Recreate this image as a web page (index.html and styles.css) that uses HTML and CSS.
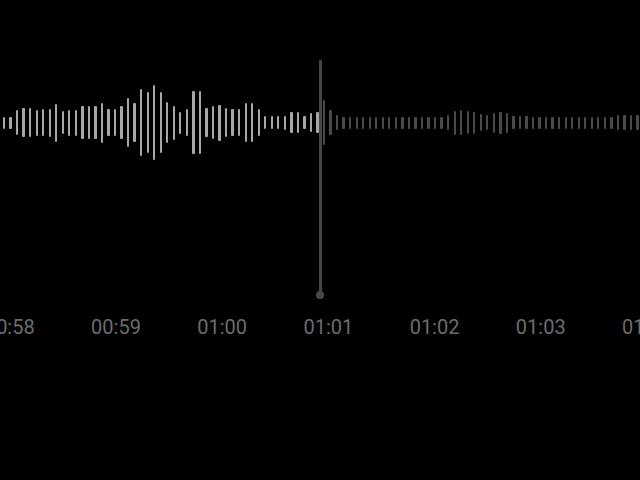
FILE: index.html
```html
<!DOCTYPE html>
<html>
<head>
<meta charset="utf-8">
<link rel="stylesheet" href="styles.css">
</head>
<body>
<main class="screen">
  <div class="wave">
    <i class="bar on" style="height:12px"></i><i class="bar on" style="height:12px"></i><i class="bar on" style="height:25px"></i><i class="bar on" style="height:29px"></i><i class="bar on" style="height:29px"></i><i class="bar on" style="height:26px"></i><i class="bar on" style="height:27px"></i><i class="bar on" style="height:28px"></i><i class="bar on" style="height:38px"></i><i class="bar on" style="height:23px"></i><i class="bar on" style="height:26px"></i><i class="bar on" style="height:26px"></i><i class="bar on" style="height:33px"></i><i class="bar on" style="height:33px"></i><i class="bar on" style="height:33px"></i><i class="bar on" style="height:40px"></i>
    <i class="bar on" style="height:27px"></i><i class="bar on" style="height:27px"></i><i class="bar on" style="height:33px"></i><i class="bar on" style="height:49px"></i><i class="bar on" style="height:39px"></i><i class="bar on" style="height:67px"></i><i class="bar on" style="height:61px"></i><i class="bar on" style="height:75px"></i><i class="bar on" style="height:61px"></i><i class="bar on" style="height:41px"></i><i class="bar on" style="height:34px"></i><i class="bar on" style="height:22px"></i><i class="bar on" style="height:27px"></i><i class="bar on" style="height:63px"></i><i class="bar on" style="height:63px"></i><i class="bar on" style="height:29px"></i><i class="bar on" style="height:33px"></i>
    <i class="bar on" style="height:36px"></i><i class="bar on" style="height:29px"></i><i class="bar on" style="height:27px"></i><i class="bar on" style="height:27px"></i><i class="bar on" style="height:39px"></i><i class="bar on" style="height:39px"></i><i class="bar on" style="height:27px"></i><i class="bar on" style="height:13px"></i><i class="bar on" style="height:13px"></i><i class="bar on" style="height:13px"></i><i class="bar on" style="height:14px"></i><i class="bar on" style="height:21px"></i><i class="bar on" style="height:21px"></i><i class="bar on" style="height:13px"></i><i class="bar on" style="height:19px"></i><i class="bar on" style="height:21px"></i>
    <i class="bar" style="height:45px"></i><i class="bar" style="height:25px"></i><i class="bar" style="height:15px"></i><i class="bar" style="height:12px"></i><i class="bar" style="height:12px"></i><i class="bar" style="height:12px"></i><i class="bar" style="height:12px"></i><i class="bar" style="height:12px"></i><i class="bar" style="height:12px"></i><i class="bar" style="height:12px"></i><i class="bar" style="height:12px"></i><i class="bar" style="height:12px"></i><i class="bar" style="height:12px"></i><i class="bar" style="height:12px"></i><i class="bar" style="height:12px"></i><i class="bar" style="height:12px"></i><i class="bar" style="height:12px"></i><i class="bar" style="height:12px"></i><i class="bar" style="height:12px"></i>
    <i class="bar" style="height:15px"></i><i class="bar" style="height:24px"></i><i class="bar" style="height:25px"></i><i class="bar" style="height:23px"></i><i class="bar" style="height:22px"></i><i class="bar" style="height:17px"></i><i class="bar" style="height:15px"></i><i class="bar" style="height:20px"></i><i class="bar" style="height:22px"></i><i class="bar" style="height:20px"></i><i class="bar" style="height:13px"></i><i class="bar" style="height:13px"></i><i class="bar" style="height:13px"></i>
    <i class="bar" style="height:12px"></i><i class="bar" style="height:12px"></i><i class="bar" style="height:12px"></i><i class="bar" style="height:12px"></i><i class="bar" style="height:12px"></i><i class="bar" style="height:12px"></i><i class="bar" style="height:12px"></i><i class="bar" style="height:12px"></i><i class="bar" style="height:12px"></i><i class="bar" style="height:12px"></i><i class="bar" style="height:12px"></i><i class="bar" style="height:12px"></i><i class="bar" style="height:12px"></i><i class="bar" style="height:15px"></i><i class="bar" style="height:15px"></i><i class="bar" style="height:15px"></i><i class="bar" style="height:15px"></i>
  </div>
  <div class="ticks">
    <span class="tick">00:58</span>
    <span class="tick">00:59</span>
    <span class="tick">01:00</span>
    <span class="tick">01:01</span>
    <span class="tick">01:02</span>
    <span class="tick">01:03</span>
    <span class="tick">01:04</span>
  </div>
  <div class="playhead"><span class="knob"></span></div>
</main>
</body>
</html>
```
FILE: styles.css
```css
html, body {
  margin: 0;
  padding: 0;
  background: #000;
}
.screen {
  position: relative;
  width: 640px;
  height: 480px;
  overflow: hidden;
  display: flex;
  flex-direction: column;
  font-family: Roboto, "Noto Sans", sans-serif;
}
.wave {
  margin-top: 82px;
  height: 81px;
  display: flex;
  align-items: center;
  gap: 4.24px;
  padding-left: 2.85px;
}
.bar {
  flex: 0 0 2.3px;
  width: 2.3px;
  border-radius: 1px;
  background: #4a4a4d;
}
.bar.on {
  background: #a6a6ab;
}
.ticks {
  margin-top: 152px;
  display: flex;
  margin-left: -43.3px;
  white-space: nowrap;
}
.tick {
  flex: 0 0 106.2px;
  text-align: center;
  font-size: 20px;
  line-height: 24px;
  color: #6c6c6e;
}
.playhead {
  position: absolute;
  left: 318.5px;
  top: 60px;
  width: 3px;
  height: 235px;
  background: #47474a;
}
.knob {
  position: absolute;
  left: -2.5px;
  bottom: -4px;
  width: 8px;
  height: 8px;
  border-radius: 50%;
  background: #47474a;
}
```
